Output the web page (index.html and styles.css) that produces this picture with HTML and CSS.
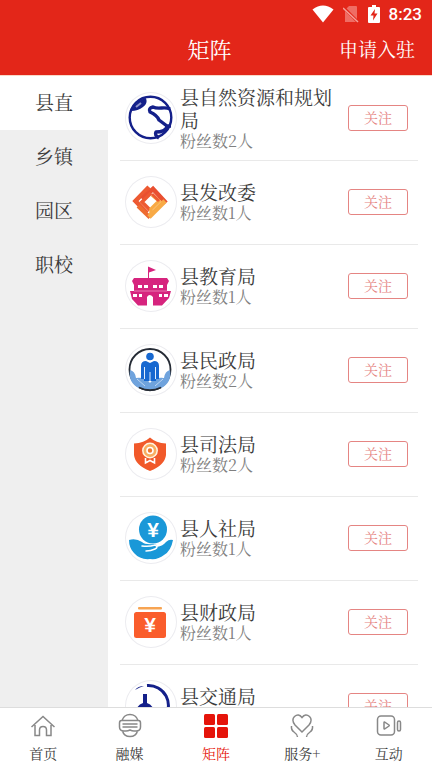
FILE: index.html
```html
<!DOCTYPE html>
<html lang="zh-CN">
<head>
    <meta charset="UTF-8">
    <meta name="viewport" content="width=device-width, initial-scale=1.0">
    <title>矩阵</title>
    <link rel="stylesheet" href="styles.css">
</head>
<body>
    <header class="header">
        <div class="status">
            <svg width="22" height="18" viewBox="0 0 22 18"><path d="M0.500 4.500Q11-3.500 21.500 4.500L11 17.500Z" fill="#fff"/></svg>
            <svg class="sim" width="16" height="18" viewBox="0 0 16 18"><path d="M6 1h7q1 0 1 1v15H2V5z" fill="#ef6d64"/><path d="M0 2l15 15" stroke="#e32619" stroke-width="3"/><path d="M0 3l15 14" stroke="#f4a09a" stroke-width="1.500"/></svg>
            <svg width="12" height="18" viewBox="0 0 12 18"><path d="M1 2h3V0h4v2h3q1 0 1 1v14q0 1-1 1H1q-1 0-1-1V3q0-1 1-1z" fill="#fff"/><path d="M7 4L2.500 10.500H5.500L5 15.500L9.500 8.500H6.500z" fill="#e32619"/></svg>
            <span class="time">8:23</span>
        </div>
        <div class="titlebar">
            <h1 class="title">矩阵</h1>
            <a class="apply" href="#apply">申请入驻</a>
        </div>
    </header>

    <div class="main">
        <nav class="side">
            <a class="side-item active" href="#county">县直</a>
            <a class="side-item" href="#town">乡镇</a>
            <a class="side-item" href="#park">园区</a>
            <a class="side-item" href="#school">职校</a>
        </nav>

        <ul class="list">
            <li class="item">
                <svg class="avatar" viewBox="0 0 52 52">
                    <circle cx="25.500" cy="25.500" r="20.800" fill="#fff" stroke="#14208a" stroke-width="2.400"/>
                    <path d="M6 19Q11 8 21 6q2 6-3 9-5 4-12 4z" fill="#14208a"/>
                    <path d="M11 15l5-4" stroke="#8f96cc" stroke-width="2"/>
                    <path d="M45 17C39 14 34 18 28 15Q23 16 25 20Q32 23 34 28L42 34H46M42 35Q40 40 31 40Q29 43 34 46" fill="none" stroke="#14208a" stroke-width="3.400" stroke-linejoin="round"/>
                </svg>
                <div class="info">
                    <h2 class="name">县自然资源和规划局</h2>
                    <p class="fans">粉丝数2人</p>
                </div>
                <button class="follow" type="button">关注</button>
            </li>
            <li class="item">
                <svg class="avatar" viewBox="0 0 52 52" fill="none">
                    <path d="M24 11L10.500 25L22 37" stroke="#ed5a32" stroke-width="4.600"/>
                    <path d="M17 23L28 13L41 27" stroke="#e94f30" stroke-width="4.600"/>
                    <path d="M26 17L17 26L25 34" stroke="#ed5a32" stroke-width="3.600"/>
                    <path d="M13 30L25 41.500" stroke="#ee6c30" stroke-width="4"/>
                    <path d="M40 25L24 41" stroke="#f8aa45" stroke-width="4.600"/>
                    <path d="M27 19L34 25L26 33V40" stroke="#f8aa45" stroke-width="3.400"/>
                    <path d="M27 18L34 25" stroke="#ed5a32" stroke-width="3"/>
                </svg>
                <div class="info">
                    <h2 class="name">县发改委</h2>
                    <p class="fans">粉丝数1人</p>
                </div>
                <button class="follow" type="button">关注</button>
            </li>
            <li class="item">
                <svg class="avatar" viewBox="0 0 52 52">
                    <path d="M23 6.500L31 10L24 12.500V18H42L44 21L42 25V31H46L44 38L37 45.500H28V37Q24.500 33 22 37V45.500H13L7 39L5 31H9V25L7 21L9 18H23z" fill="#d6247e"/>
                    <path d="M13 25h4v3h-4zM19 25h4v3h-4zM28 25h4v3h-4zM34 25h4v3h-4zM8 34h4v3H8zM14 34h3v3h-3zM34 34h3v3h-3zM39 34h4v3h-4z" fill="#fff"/>
                    <path d="M9 31H42" stroke="#e87bb0"/>
                </svg>
                <div class="info">
                    <h2 class="name">县教育局</h2>
                    <p class="fans">粉丝数1人</p>
                </div>
                <button class="follow" type="button">关注</button>
            </li>
            <li class="item">
                <svg class="avatar" viewBox="0 0 52 52">
                    <circle cx="25" cy="25.500" r="20.500" fill="#fff" stroke="#252b35" stroke-width="1.800"/>
                    <path d="M5 26Q10 27 11 34Q21 33 25 39Q29 33 39 34Q40 27 45 26Q47 39 36 44L25 46L14 44Q3 39 5 26z" fill="#6fa3dd"/>
                    <path d="M12 35L20 42M38 35L30 42" stroke="#bed6f2" fill="none"/>
                    <circle cx="25" cy="12.500" r="3.800" fill="#1768d0"/>
                    <path d="M16 35V22Q16 17 21 17L25 19L29 17Q34 17 34 22V35H31V37H19V35z" fill="#1768d0"/>
                    <path d="M19.500 35V23M30.500 35V23M25 37V28" stroke="#e3effd"/>
                    <path d="M14 43.500Q25 49 36 43.500" stroke="#252b35" stroke-width="1.800" fill="none"/>
                </svg>
                <div class="info">
                    <h2 class="name">县民政局</h2>
                    <p class="fans">粉丝数2人</p>
                </div>
                <button class="follow" type="button">关注</button>
            </li>
            <li class="item">
                <svg class="avatar" viewBox="0 0 52 52">
                    <path d="M25 9.500Q31 15 41 15.500V27Q40 37 25 43Q10 37 9 27V15.500Q19 15 25 9.500z" fill="#f1592a"/>
                    <circle cx="25" cy="22.500" r="7.200" fill="#f9ae60" stroke="#fff3df" stroke-width="1.500"/>
                    <circle cx="25" cy="22.500" r="3" fill="#f1782d" stroke="#fff" stroke-width="1.600"/>
                    <path d="M20.500 30V35L25 32.500L29.500 35V30" fill="none" stroke="#fff" stroke-width="1.600"/>
                </svg>
                <div class="info">
                    <h2 class="name">县司法局</h2>
                    <p class="fans">粉丝数2人</p>
                </div>
                <button class="follow" type="button">关注</button>
            </li>
            <li class="item">
                <svg class="avatar" viewBox="0 0 52 52">
                    <circle cx="28" cy="17.500" r="14" fill="#1a98d8"/>
                    <text class="yen" x="28" y="25" text-anchor="middle">¥</text>
                    <path d="M4 28Q11 26 17 30Q20 33 29 32Q33 33 32 35Q38 34 41 30Q44 27 48 28Q46 39 39 43Q33 48 25 47Q15 48 9 41Q4 36 4 28z" fill="#1a98d8"/>
                    <path d="M17 34Q24 35 30 33Q34 35 30 37Q26 39 21 39" fill="none" stroke="#fff" stroke-width="1.500" stroke-linecap="round"/>
                </svg>
                <div class="info">
                    <h2 class="name">县人社局</h2>
                    <p class="fans">粉丝数1人</p>
                </div>
                <button class="follow" type="button">关注</button>
            </li>
            <li class="item">
                <svg class="avatar" viewBox="0 0 52 52">
                    <rect x="13" y="11" width="24" height="2.500" rx="1" fill="#f7a452"/>
                    <rect x="9" y="16" width="32" height="26" rx="2.500" fill="#fa5d2c"/>
                    <text class="yen" x="25" y="36" text-anchor="middle">¥</text>
                </svg>
                <div class="info">
                    <h2 class="name">县财政局</h2>
                    <p class="fans">粉丝数1人</p>
                </div>
                <button class="follow" type="button">关注</button>
            </li>
            <li class="item">
                <svg class="avatar" viewBox="0 0 52 52">
                    <path d="M22 5.500A20 20 0 0 1 39 38M35 42A20 20 0 0 1 5 30" fill="none" stroke="#14208a" stroke-width="3"/>
                    <path d="M10 10Q13 6 19 6Q15 7 10 10z" fill="#14208a"/>
                    <path d="M18 14h4v9q4 1 6 5l4 10H8l4-10q2-4 6-5z" fill="#14208a"/>
                </svg>
                <div class="info">
                    <h2 class="name">县交通局</h2>
                    <p class="fans">粉丝数1人</p>
                </div>
                <button class="follow" type="button">关注</button>
            </li>
        </ul>
    </div>

    <nav class="tabs">
        <a class="tab" href="#home">
            <svg class="tab-icon" viewBox="0 0 28 28"><path d="M2.500 15L14 4.500L25.500 15M6 13V23.500H10.500V18Q10.500 14.500 14 14.500Q17.500 14.500 17.500 18V23.500H22V13"/></svg>
            首页
        </a>
        <a class="tab" href="#media">
            <svg class="tab-icon" viewBox="0 0 28 28"><path d="M6 8.500Q8 2.500 14 2.500Q20 2.500 22 8.500M5.500 8.500H22.500Q24.500 8.500 24.500 11V15Q24.500 19 20 19H18Q16 19 14 18Q12 19 10 19H8Q3.500 19 3.500 15V11Q3.500 8.500 5.500 8.500zM6.500 12H21.500M6.500 15H21.500M6.500 19Q8 24.500 14 24.500Q20 24.500 21.500 19"/></svg>
            融媒
        </a>
        <a class="tab current" href="#matrix">
            <svg class="tab-icon solid" viewBox="0 0 28 28"><rect x="2" y="2" width="11" height="11" rx="1.500"/><rect x="15" y="2" width="11" height="11" rx="1.500"/><rect x="2" y="15" width="11" height="11" rx="1.500"/><rect x="15" y="15" width="11" height="11" rx="1.500"/></svg>
            矩阵
        </a>
        <a class="tab" href="#service">
            <svg class="tab-icon" viewBox="0 0 28 28"><path d="M14 20L7 13Q3 8 6.500 4.500Q10.500 1 14 5.500Q17.500 1 21.500 4.500Q25 8 21 13zM3.500 14Q3 18 6 20Q9 22 9.500 25M24.500 14Q25 18 22 20Q19 22 18.500 25"/></svg>
            服务+
        </a>
        <a class="tab" href="#interact">
            <svg class="tab-icon" viewBox="0 0 28 28"><rect x="2.500" y="4" width="17" height="19" rx="3.500"/><path d="M9 10.500Q9 10 9.500 10L14 13Q14.500 13.500 14 14L9.500 17Q9 17 9 16.500z"/><rect x="22.500" y="9" width="3" height="10" rx="1.500"/></svg>
            互动
        </a>
    </nav>
</body>
</html>
```

FILE: styles.css
```css
* {
    box-sizing: border-box;
}
body {
    margin: 0;
    height: 100vh;
    display: flex;
    flex-direction: column;
    background: #fff;
    color: #3a3a3a;
    font-family: "Noto Serif CJK SC", "Noto Serif SC", "Liberation Serif", "Noto Sans CJK SC", serif;
}
a {
    color: inherit;
    text-decoration: none;
}

/* header */
.header {
    background: #e32619;
    color: #fff;
    border-bottom: 1px solid #f9d9c8;
}
.status {
    display: flex;
    align-items: center;
    justify-content: flex-end;
    gap: 9px;
    height: 28px;
    padding-right: 10px;
}
.time {
    font: 500 17px/28px Roboto, sans-serif;
}
.titlebar {
    display: grid;
    grid-template-columns: 1fr auto 1fr;
    align-items: center;
    height: 47px;
    padding: 0 17px 6px 4px;
}
.title {
    grid-column: 2;
    margin: 0;
    font-size: 22px;
    font-weight: 400;
    line-height: 28px;
}
.apply {
    justify-self: end;
    font-size: 19px;
    line-height: 28px;
}

/* content */
.main {
    flex: 1;
    min-height: 0;
    display: flex;
}
.side {
    width: 25%;
    background: #efefef;
}
.side-item {
    display: block;
    height: 54px;
    font-size: 19px;
    line-height: 52px;
    text-align: center;
}
.side-item.active {
    background: #fff;
}
.list {
    flex: 1;
    margin: 0;
    padding: 1px 14px 0 12px;
    list-style: none;
    overflow-y: auto;
    scrollbar-width: none;
}
.item {
    display: flex;
    align-items: center;
    height: 84px;
    padding: 0 10px 2px 5px;
    border-bottom: 1px solid #e9e9e9;
}
.avatar {
    flex: none;
    width: 52px;
    height: 52px;
    border-radius: 50%;
    box-shadow: inset 0 0 0 1px #ececf0;
}
.yen {
    fill: #fff;
    font: bold 21px "Liberation Sans", sans-serif;
}
.info {
    flex: 1;
    padding: 0 12px 0 3px;
}
.name {
    margin: 0;
    font-size: 19px;
    font-weight: 400;
    line-height: 23px;
}
.fans {
    margin: 0;
    color: #808080;
    font-size: 16px;
    line-height: 20px;
}
.follow {
    flex: none;
    width: 60px;
    height: 26px;
    padding: 0 0 2px;
    border: 1px solid #e58583;
    border-radius: 3px;
    background: #fff;
    color: #e58583;
    font-family: inherit;
    font-size: 14px;
    line-height: 20px;
}

/* bottom tabs */
.tabs {
    display: flex;
    height: 61px;
    border-top: 1px solid #ddd;
    background: #fff;
}
.tab {
    flex: 1;
    display: flex;
    flex-direction: column;
    align-items: center;
    gap: 3px;
    padding-top: 4px;
    font-size: 14px;
    line-height: 20px;
}
.tab-icon {
    width: 28px;
    height: 28px;
    fill: none;
    stroke: #888;
    stroke-width: 1.5;
}
.tab-icon.solid {
    fill: #e5140a;
    stroke: none;
}
.tab.current {
    color: #e5140a;
}
```
